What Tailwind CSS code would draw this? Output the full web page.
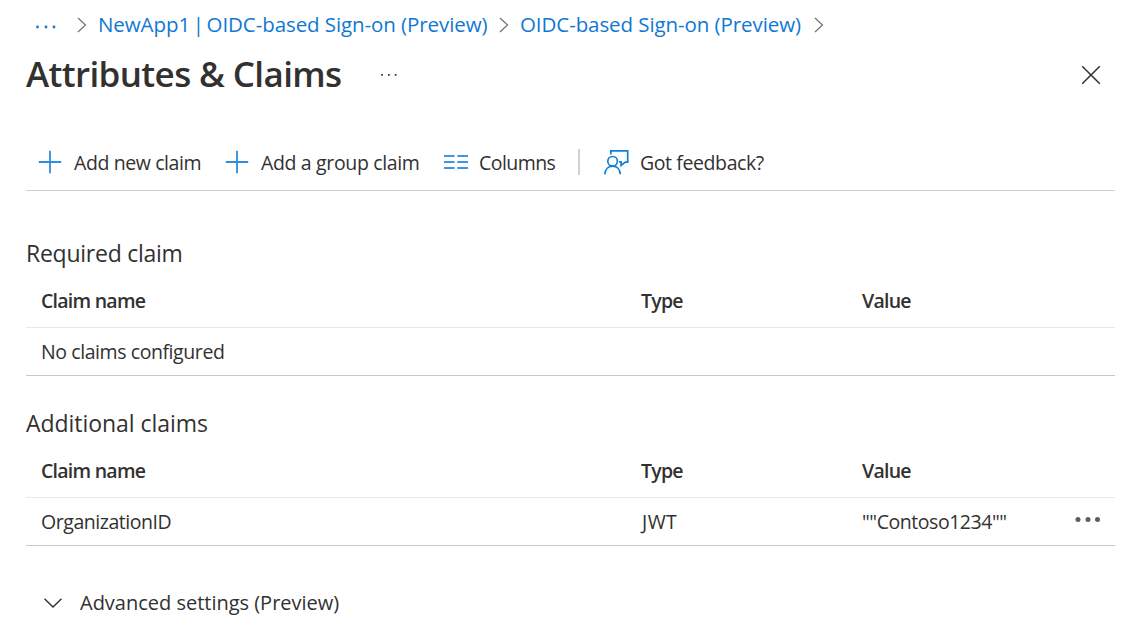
<!DOCTYPE html>
<html lang="en">
<head>
<meta charset="utf-8">
<title>Attributes &amp; Claims</title>
<script src="https://cdn.jsdelivr.net/npm/@tailwindcss/browser@4"></script>
</head>
<body class="bg-white text-[#323130] font-['Open_Sans','Noto_Sans',sans-serif] text-[19.5px] whitespace-nowrap overflow-hidden">
<main class="w-[1128px] h-[637px] pl-[26px] pr-[13px]">
  <nav class="flex items-center h-[50px] text-[20.5px] tracking-[-0.08px] text-[#0f78d4]">
    <svg class="w-[24px] h-[4px] ml-[8px] mt-[3px]" viewBox="0 0 24 4" fill="currentColor"><circle cx="3.5" cy="2" r="1.4"/><circle cx="12" cy="2" r="1.4"/><circle cx="20" cy="2" r="1.4"/></svg>
    <svg class="w-[10px] h-[16px] ml-[19px]" viewBox="0 0 10 16" fill="none" stroke="#707070" stroke-width="1.2"><path d="M1 1l7.5 7L1 15"/></svg>
    <a class="w-[401px] ml-[11px] pb-[2px]">NewApp1<span class="[word-spacing:-2.6px]"> | </span>OIDC-based Sign-on (Preview)</a>
    <svg class="w-[10px] h-[16px]" viewBox="0 0 10 16" fill="none" stroke="#707070" stroke-width="1.2"><path d="M1 1l7.5 7L1 15"/></svg>
    <a class="w-[294px] ml-[11px] pb-[2px]">OIDC-based Sign-on (Preview)</a>
    <svg class="w-[10px] h-[16px]" viewBox="0 0 10 16" fill="none" stroke="#707070" stroke-width="1.2"><path d="M1 1l7.5 7L1 15"/></svg>
  </nav>
  <header class="flex items-center h-[50px]">
    <h1 class="w-[354px] pb-[2px] text-[35px] font-semibold tracking-[-0.62px]">Attributes &amp; Claims</h1>
    <svg class="w-[18px] h-[4px]" viewBox="0 0 18 4" fill="#323130"><path d="M1.2 1h1.7v1.7H1.2zM8 1h1.7v1.7H8zM14.8 1h1.7v1.7H14.8z"/></svg>
    <svg class="w-[20px] h-[20px] ml-auto mr-[14px]" viewBox="0 0 20 20" fill="none" stroke="#323130" stroke-width="1.5"><path d="M1.2 1.2l17.6 17.6M18.8 1.2L1.2 18.8"/></svg>
  </header>
  <div class="flex items-center h-[91px] pt-[34px] border-b border-[#d2d0ce] pl-[12px] tracking-[-0.4px]">
    <svg class="w-[24px] h-[24px]" viewBox="0 0 24 24" stroke="#2f8ddb" stroke-width="1.8"><path d="M.8 12h22.4M12 .8v22.4"/></svg>
    <span class="w-[151px] ml-[12px] pt-[2px]">Add new claim</span>
    <svg class="w-[24px] h-[24px]" viewBox="0 0 24 24" stroke="#2f8ddb" stroke-width="1.8"><path d="M.8 12h22.4M12 .8v22.4"/></svg>
    <span class="w-[183px] ml-[12px] pt-[2px] tracking-[-0.35px]">Add a group claim</span>
    <svg class="w-[24px] h-[14px]" viewBox="0 0 24 14" fill="#3f98df"><path d="M0 0h10.6v2H0zM0 6h10.6v2H0zM0 12h10.6v2H0zM13.3 0H24v2H13.3zM13.3 6H24v2H13.3zM13.3 12H24v2H13.3z"/></svg>
    <span class="w-[99px] ml-[11px] pt-[2px] tracking-[-0.55px]">Columns</span>
    <i class="w-[2px] h-[26px] bg-[#d2d0ce]"></i>
    <svg class="w-[25px] h-[25px] ml-[24px]" viewBox="0 0 25 25" fill="none" stroke="#0f7fd8" stroke-width="1.7"><path d="M6.8 4.5V.9h16.9v11.2h-2.4l-4.2 3.4v-3.7h-2"/><circle cx="8.6" cy="11.3" r="4.8"/><path d="M.9 24.3c.3-5 3.5-8.2 7.7-8.2s7.4 3.2 7.7 8.2"/></svg>
    <span class="ml-[11px] pt-[2px]">Got feedback?</span>
  </div>
  <h2 class="flex items-end h-[79px] pb-[1px] text-[23px] leading-[32px] tracking-[-0.25px]">Required claim</h2>
  <div class="grid grid-cols-[600px_221px_1fr] items-center h-[58px] pl-[15px] pt-[4px] border-b border-[#e8e8e8] font-semibold tracking-[-0.75px]"><span>Claim name</span><span>Type</span><span>Value</span></div>
  <div class="flex items-center h-[48px] pl-[15px] border-b border-[#c8c8c8] tracking-[-0.42px]">No claims configured</div>
  <h2 class="flex items-end h-[64px] pb-[1px] text-[23px] leading-[32px] tracking-[-0.04px]">Additional claims</h2>
  <div class="grid grid-cols-[600px_221px_1fr] items-center h-[58px] pl-[15px] pt-[4px] border-b border-[#e8e8e8] font-semibold tracking-[-0.75px]"><span>Claim name</span><span>Type</span><span>Value</span></div>
  <div class="grid grid-cols-[600px_221px_1fr_40px] items-center h-[48px] pl-[15px] border-b border-[#c8c8c8] tracking-[-0.45px]"><span>OrganizationID</span><span class="pl-px tracking-[0.4px]">JWT</span><span>""Contoso1234""</span>
    <svg class="w-[26px] h-[6px] mb-[5px]" viewBox="0 0 26 6" fill="#605e5c"><circle cx="3" cy="3.5" r="2.5"/><circle cx="13" cy="3.5" r="2.5"/><circle cx="22.5" cy="3.5" r="2.5"/></svg>
  </div>
  <div class="flex items-center mt-[36px] h-[42px] pl-[18px] text-[20px] tracking-[-0.01px]">
    <svg class="w-[18px] h-[10px]" viewBox="0 0 18 10" fill="none" stroke="#323130" stroke-width="1.4"><path d="M.5 .7L9 9 17.5 .7"/></svg>
    <span class="ml-[18px]">Advanced settings (Preview)</span>
  </div>
</main>
</body>
</html>
